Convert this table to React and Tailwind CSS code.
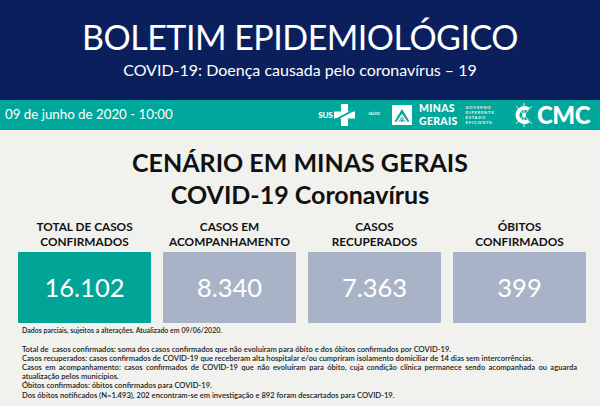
import React from "react";

function SusLogo() {
  return (
    <div className="flex items-center gap-[2px]">
      <span className="text-white font-black text-[8px] leading-none tracking-tight">SUS</span>
      <svg width="21" height="22" viewBox="0 0 21 22">
        <path d="M7 0h7v7.5h7v7h-7v7.5H7v-7.5H0v-7h7z" fill="#fff" />
        <path d="M-1 17 L22 5" stroke="#00a89b" strokeWidth="1.6" />
      </svg>
    </div>
  );
}

function MinasLogo() {
  return (
    <div className="flex items-center">
      <svg width="20" height="20" viewBox="0 0 20 20" className="mr-[7px]">
        <rect width="20" height="20" fill="#fff" />
        <polygon points="2.5,16.5 10,4 17.5,16.5" fill="#00a89b" />
        <polyline points="5.5,16.5 10,10 14.5,16.5" fill="none" stroke="#fff" strokeWidth="1.4" />
        <polyline points="7.5,16.5 10,13 12.5,16.5" fill="none" stroke="#fff" strokeWidth="0.8" />
      </svg>
      <p className="text-white font-black text-[10.5px] leading-[12.6px] tracking-[0.3px]">
        MINAS<br />GERAIS
      </p>
      <p className="text-white font-bold text-[4.2px] leading-[5.1px] tracking-[0.7px] ml-[8px] opacity-90">
        GOVERNO<br />DIFERENTE.<br />ESTADO<br />EFICIENTE.
      </p>
    </div>
  );
}

function CmcLogo() {
  return (
    <div className="flex items-center gap-[2px]">
      <svg width="22" height="24" viewBox="0 0 22 24">
        <path d="M15.5 6.2 A7 7 0 1 0 15.5 17.8" fill="none" stroke="#fff" strokeWidth="4" />
        <line x1="11" y1="0" x2="11" y2="24" stroke="#fff" strokeWidth="0.9" />
        <line x1="3" y1="3" x2="19" y2="21" stroke="#fff" strokeWidth="0.8" />
        <line x1="19" y1="3" x2="3" y2="21" stroke="#fff" strokeWidth="0.8" />
        <circle cx="11" cy="12" r="2" fill="#fff" />
      </svg>
      <span className="text-white font-black text-[24px] leading-none tracking-[-0.5px]">CMC</span>
    </div>
  );
}

const stats = [
  { label: ["TOTAL DE CASOS", "CONFIRMADOS"], value: "16.102", color: "bg-[#00a598]" },
  { label: ["CASOS EM", "ACOMPANHAMENTO"], value: "8.340", color: "bg-[#a9b3c7]" },
  { label: ["CASOS", "RECUPERADOS"], value: "7.363", color: "bg-[#a9b3c7]" },
  { label: ["ÓBITOS", "CONFIRMADOS"], value: "399", color: "bg-[#a9b3c7]" },
];

export default function App() {
  return (
    <div className="w-[600px] h-[406px] overflow-hidden bg-[#f1f1ee] font-['Lato',sans-serif] text-[#111]">
      <header className="h-[100px] bg-[#0b1f5d] flex flex-col items-center pt-[17px]">
        <h1 className="text-white text-[34px] leading-[40px] tracking-[-0.5px]">BOLETIM EPIDEMIOLÓGICO</h1>
        <p className="text-white text-[16px] leading-[20px] mt-[3px]">COVID-19: Doença causada pelo coronavírus – 19</p>
      </header>
      <div className="h-[30px] bg-[#00a89b] flex items-center pl-[5px] pr-[10px]">
        <span className="text-white text-[13.3px] leading-none">09 de junho de 2020 - 10:00</span>
        <div className="ml-auto flex items-center">
          <SusLogo />
          <span className="text-white font-bold text-[3.5px] ml-[13px] mr-[12px] opacity-90">SAÚDE</span>
          <MinasLogo />
          <div className="ml-[17px]">
            <CmcLogo />
          </div>
        </div>
      </div>
      <section className="flex flex-col items-center pt-[16px]">
        <h2 className="font-bold text-[25px] leading-[32px]">CENÁRIO EM MINAS GERAIS</h2>
        <h2 className="font-bold text-[25px] leading-[32px]">COVID-19 Coronavírus</h2>
      </section>
      <div className="grid grid-cols-4 gap-x-[12px] pl-[18px] pr-[14px] mt-[9px]">
        {stats.map((s) => (
          <div key={s.value} className="flex flex-col">
            <div className="flex flex-col items-center font-bold text-[11.8px] leading-[15px] h-[33px]">
              <span>{s.label[0]}</span>
              <span>{s.label[1]}</span>
            </div>
            <div className={`${s.color} h-[71px] rounded-[1px] flex items-center justify-center`}>
              <span className="text-white text-[25.5px] leading-none">{s.value}</span>
            </div>
          </div>
        ))}
      </div>
      <div className="pl-[22px] pr-[23px] pt-[2px] text-[#1a1a1a] font-semibold">
        <p className="text-[7px] leading-[10px]">Dados parciais, sujeitos a alterações. Atualizado em 09/06/2020.</p>
        <div className="mt-[9.5px] text-justify text-[7.6px] leading-[9.2px]">
          <p>Total de&nbsp; casos confirmados: soma dos casos confirmados que não evoluíram para óbito e dos óbitos confirmados por COVID-19.</p>
          <p>Casos recuperados: casos confirmados de COVID-19 que receberam alta hospitalar e/ou cumpriram isolamento domiciliar de 14 dias sem intercorrências.</p>
          <p>Casos em acompanhamento: casos confirmados de COVID-19 que não evoluíram para óbito, cuja condição clínica permanece sendo acompanhada ou aguarda atualização pelos municípios.</p>
          <p>Óbitos confirmados: óbitos confirmados para COVID-19.</p>
          <p>Dos óbitos notificados (N=1.493), 202 encontram-se em investigação e 892 foram descartados para COVID-19.</p>
        </div>
      </div>
    </div>
  );
}
